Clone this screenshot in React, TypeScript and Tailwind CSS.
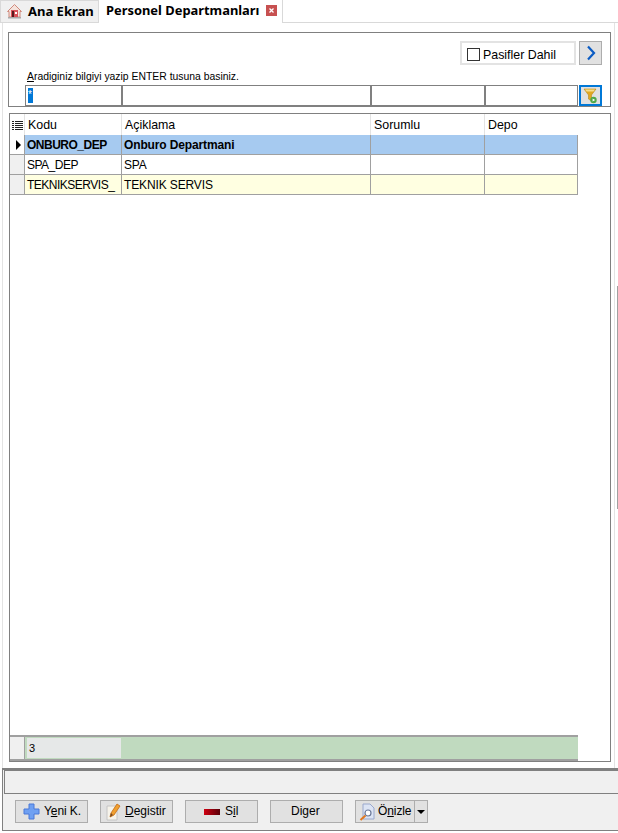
const Row = ({ code, name, bg, gutter, bold, arrow }: { code: string; name: string; bg: string; gutter: string; bold?: boolean; arrow?: boolean }) => {
    return (
        <div className="flex h-[20px] w-[568px] border-b border-[#a0a0a0] text-[12px] leading-[20px] text-black">
            <div className={`w-[15px] shrink-0 border-r border-[#a0a0a0] flex items-center justify-center ${gutter}`}>
                {arrow && <div className="ml-[3px] w-0 h-0 border-y-[5px] border-y-transparent border-l-[5px] border-l-black"></div>}
            </div>
            <div className={`w-[97px] shrink-0 border-r border-[#a0a0a0] pl-[2px] overflow-hidden whitespace-nowrap tracking-[-0.5px] ${bg} ${bold ? "font-bold" : ""}`}>{code}</div>
            <div className={`w-[249px] shrink-0 border-r border-[#a0a0a0] pl-[2px] tracking-[-0.13px] ${bg} ${bold ? "font-bold" : ""}`}>{name}</div>
            <div className={`w-[114px] shrink-0 border-r border-[#a0a0a0] ${bg}`}></div>
            <div className={`w-[93px] shrink-0 border-r border-[#a0a0a0] ${bg}`}></div>
        </div>
    );
};

const ToolButton = ({ w, children }: { w: string; children: React.ReactNode }) => {
    return (
        <div className={`h-[23px] ${w} flex items-center bg-[#e1e1e1] border border-[#adadad] text-[12px] text-black`}>
            {children}
        </div>
    );
};

const App = () => {
    return (
        <div className="relative w-[618px] h-[833px] bg-white flex flex-col overflow-hidden font-['Liberation_Sans',Arial,sans-serif]">
            {/* scrollbar edge */}
            <div className="absolute left-[617px] top-[286px] w-[1px] h-[223px] bg-[#a0a0a0]"></div>

            {/* tabs */}
            <div className="h-[23px] shrink-0 flex border-b border-[#d9d9d9] font-['Noto_Sans',sans-serif] font-bold text-[13px] text-black">
                <div className="w-[99px] h-[23px] bg-[#f0f0f0] border border-[#d9d9d9] flex items-center pl-[6px] gap-[6px]">
                    <svg width="15" height="15" viewBox="0 0 15 15">
                        <path d="M7.5 0.5 L14.5 7.5 L13 7.5 L13 13 L2 13 L2 7.5 L0.5 7.5 Z" fill="#f5e3dc" stroke="#d08a7c" strokeWidth="1" />
                        <rect x="4" y="6" width="7" height="7" fill="#d9535a" />
                        <rect x="5" y="7" width="2" height="6" fill="#5b1a1e" />
                        <rect x="8" y="8" width="2" height="2" fill="#fff" />
                        <rect x="1" y="13" width="13" height="1.5" fill="#a9a9a9" />
                    </svg>
                    <span>Ana Ekran</span>
                </div>
                <div className="w-[184px] h-[23px] bg-white border-r border-[#d9d9d9] flex items-center pl-[7px] pb-[2px]">
                    <span className="text-[12.9px]">Personel Departmanları</span>
                    <div className="ml-[7px] w-[11px] h-[11px] bg-[#c75050] flex items-center justify-center">
                        <svg width="7" height="7" viewBox="0 0 7 7"><path d="M1.5 1.5 L5.5 5.5 M5.5 1.5 L1.5 5.5" stroke="#fff" strokeWidth="1.3" /></svg>
                    </div>
                </div>
            </div>

            {/* main */}
            <div className="h-[745px] shrink-0 ml-[2px] mr-[3px] border-l border-r border-[#e3e3e3] pt-[9px]">
                {/* search panel */}
                <div className="ml-[5px] mr-[3px] h-[75px] border border-[#808080] pl-[16px] pt-[8px] flex flex-col">
                    <div className="flex justify-end gap-[3px] pr-[8px] h-[24px]">
                        <div className="w-[116px] h-[24px] border-2 border-[#e3e3e3] flex items-center pl-[5px] pt-[3px] gap-[3px] text-[12.4px] text-black">
                            <div className="w-[13px] h-[13px] border border-[#333333] bg-white"></div>
                            <span className="pt-[1px]">Pasifler Dahil</span>
                        </div>
                        <div className="w-[23px] h-[24px] bg-[#e1e1e1] border border-[#adadad] flex items-center justify-center">
                            <svg width="10" height="16" viewBox="0 0 10 16"><path d="M2 1.5 L8 8 L2 14.5" fill="none" stroke="#0b5cc4" strokeWidth="2.2" /></svg>
                        </div>
                    </div>
                    <div className="h-[20px] pl-[2px] pt-[5px] text-[10.4px] leading-[13px] text-black"><u>A</u>radiginiz bilgiyi yazip ENTER tusuna basiniz.</div>
                    <div className="flex h-[21px] gap-[1px]">
                        <div className="flex h-[21px] w-[553px] border border-[#808080] text-[12px]">
                            <div className="w-[97px] border-r-2 border-[#808080] pt-[2px] pl-[2px]">
                                <span className="block w-[5px] h-[15px] bg-[#0078d7] text-white text-[10px] leading-[13px]">*</span>
                            </div>
                            <div className="w-[249px] border-r-2 border-[#808080]"></div>
                            <div className="w-[114px] border-r-2 border-[#808080]"></div>
                            <div className="flex-1"></div>
                        </div>
                        <div className="w-[23px] h-[21px] bg-[#e1e1e1] border-2 border-[#0078d7] flex items-center justify-center">
                            <svg width="15" height="16" viewBox="0 0 15 16">
                                <path d="M1 1 L13 1 L8.5 7 L8.5 13 L5.5 11 L5.5 7 Z" fill="#e2a820" stroke="#b98a1a" strokeWidth="0.6" />
                                <path d="M2 1.5 L12 1.5 L10.5 3.5 L3.5 3.5 Z" fill="#f6dd8a" />
                                <circle cx="10.5" cy="12" r="3.2" fill="#4fa848" />
                                <path d="M9.6 10.4 L12.2 12 L9.6 13.6 Z" fill="#fff" />
                            </svg>
                        </div>
                    </div>
                </div>

                {/* grid */}
                <div className="ml-[6px] mr-[3px] mt-[6px] h-[649px] border border-[#808080] flex flex-col">
                    <div className="flex h-[21px] shrink-0 w-[568px] text-[12.4px] leading-[23px] text-black">
                        <div className="w-[15px] shrink-0 border-r border-[#e3e3e3] flex items-center justify-center">
                            <svg width="11" height="10" viewBox="0 0 11 10">
                                <path d="M0 1.5 H2 M3 1.5 H11 M0 3.5 H2 M3 3.5 H11 M0 5.5 H2 M3 5.5 H11 M0 7.5 H2 M3 7.5 H11 M0 9.5 H2 M3 9.5 H11" stroke="#222222" strokeWidth="1" />
                            </svg>
                        </div>
                        <div className="w-[97px] shrink-0 border-r border-[#e3e3e3] pl-[3px]">Kodu</div>
                        <div className="w-[249px] shrink-0 border-r border-[#e3e3e3] pl-[3px]">Açiklama</div>
                        <div className="w-[114px] shrink-0 border-r border-[#e3e3e3] pl-[3px]">Sorumlu</div>
                        <div className="w-[93px] shrink-0 pl-[3px]">Depo</div>
                    </div>
                    <Row code="ONBURO_DEP" name="Onburo Departmani" bg="bg-[#a6caf0]" gutter="bg-white" bold arrow />
                    <Row code="SPA_DEP" name="SPA" bg="bg-white" gutter="bg-[#f0f0f0]" />
                    <Row code="TEKNIKSERVIS_" name="TEKNIK SERVIS" bg="bg-[#ffffe1]" gutter="bg-[#f0f0f0]" />
                    <div className="flex-1"></div>
                    {/* footer */}
                    <div className="flex h-[26px] shrink-0 w-[568px] border-t-2 border-b-2 border-[#a0a0a0] text-[11px] text-black">
                        <div className="w-[15px] shrink-0 bg-[#f0f0f0] border-r border-[#a0a0a0]"></div>
                        <div className="flex-1 bg-[#c0dabf] pl-[2px] pt-[1px]">
                            <div className="w-[94px] h-[20px] bg-[#e6e8e8] pl-[2px] leading-[21px]">3</div>
                        </div>
                    </div>
                </div>
            </div>

            {/* bottom */}
            <div className="h-[63px] shrink-0 ml-[2px] border-l border-b border-[#808080] border-t-2 bg-[#f0f0f0] flex flex-col">
                <div className="h-[24px] shrink-0 ml-[1px] border-l border-t border-b border-[#808080]"></div>
                <div className="flex gap-[12px] pl-[12px] pt-[6px]">
                    <ToolButton w="w-[73px]">
                        <svg className="ml-[7px]" width="17" height="17" viewBox="0 0 17 17">
                            <path d="M6 1 H11 V6 H16 V11 H11 V16 H6 V11 H1 V6 H6 Z" fill="#6fa0f2" stroke="#4a78d8" strokeWidth="1" />
                        </svg>
                        <span className="ml-[4px] pb-[1px] tracking-[-0.1px]">Y<u>e</u>ni K.</span>
                    </ToolButton>
                    <ToolButton w="w-[73px]">
                        <svg className="ml-[5px]" width="16" height="18" viewBox="0 0 16 18">
                            <path d="M1 3 H11 V17 H1 Z" fill="#f6f3ea" stroke="#c4c4c4" strokeWidth="1" />
                            <path d="M4 14 L5 10 L11 1 L14 3 L8 12 Z" fill="#f0a030" stroke="#c46a10" strokeWidth="0.8" />
                            <path d="M4 14 L5 10 L7 12 Z" fill="#7a4a20" />
                        </svg>
                        <span className="ml-[3px] pb-[1px]"><u>D</u>egistir</span>
                    </ToolButton>
                    <ToolButton w="w-[73px]">
                        <div className="ml-[18px] w-[16px] h-[6px] bg-gradient-to-r from-[#d00010] to-[#5a0008]"></div>
                        <span className="ml-[5px] pb-[1px]">S<u>i</u>l</span>
                    </ToolButton>
                    <ToolButton w="w-[73px]">
                        <span className="ml-[20px] pb-[1px]">Di<u>g</u>er</span>
                    </ToolButton>
                    <div className="flex">
                        <ToolButton w="w-[60px]">
                            <svg className="ml-[3px]" width="17" height="18" viewBox="0 0 17 18">
                                <path d="M4 1 H11 L15 5 V16 H4 Z" fill="#dce4f4" stroke="#9aa8cc" strokeWidth="1" />
                                <circle cx="9" cy="10" r="3" fill="#ffffff" stroke="#6a7898" strokeWidth="1.2" />
                                <path d="M6.5 12.5 L1.5 17" stroke="#e07820" strokeWidth="2" />
                            </svg>
                            <span className="ml-[2px] pb-[1px] tracking-[-0.1px]">Ö<u>n</u>izle</span>
                        </ToolButton>
                        <div className="w-[13px] h-[23px] bg-[#e1e1e1] border border-l-0 border-[#adadad] flex items-center justify-center">
                            <div className="w-0 h-0 border-x-[4px] border-x-transparent border-t-[4px] border-t-black"></div>
                        </div>
                    </div>
                </div>
            </div>
        </div>
    );
};

export default App;
